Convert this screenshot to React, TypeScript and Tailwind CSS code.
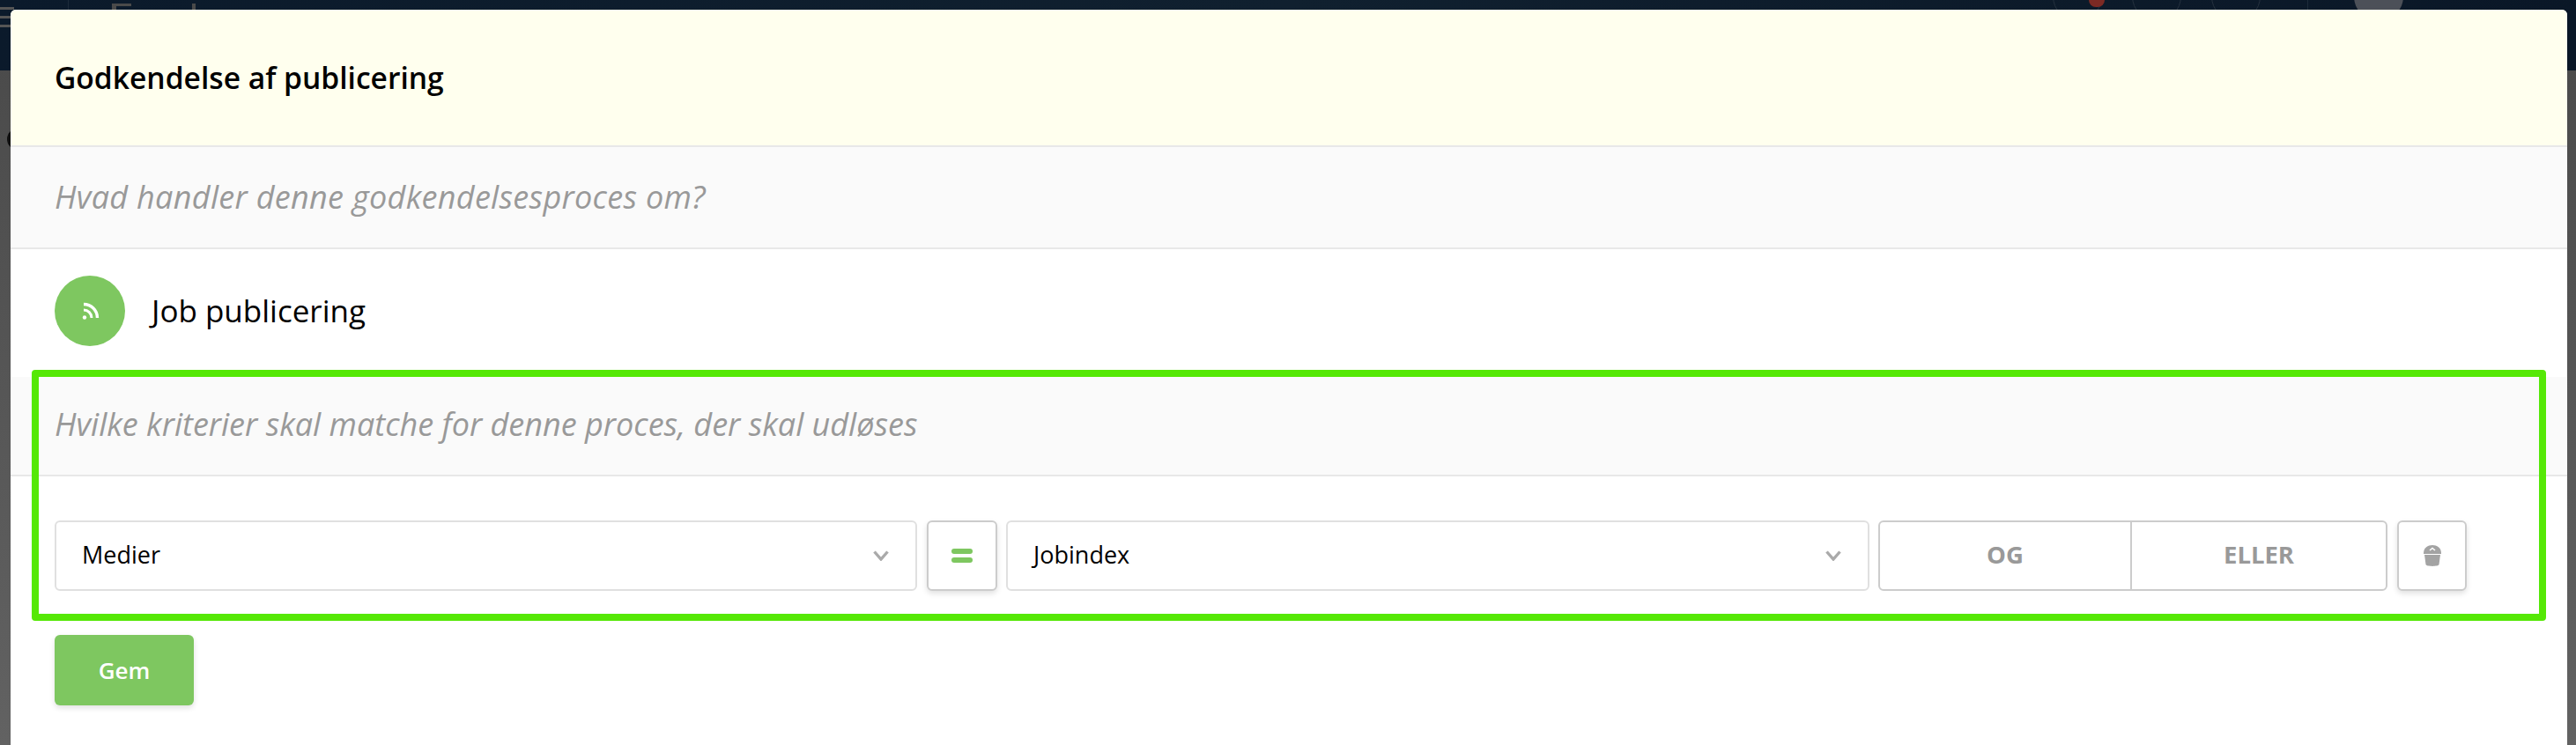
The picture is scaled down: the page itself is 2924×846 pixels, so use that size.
const font = { fontFamily: '"Open Sans", "Liberation Sans", sans-serif' };

function Chevron() {
  return (
    <svg width="20" height="12" viewBox="0 0 20 12" className="shrink-0">
      <path d="M2.5 1.5 L10 10 L17.5 1.5" fill="none" stroke="#aaaaaa" strokeWidth="3.4" />
    </svg>
  );
}

function Select({ label, width }: { label: string; width: string }) {
  return (
    <div className={`${width} h-20 shrink-0 border-2 border-[#e0e0e0] rounded-md bg-white flex items-center justify-between pl-[29px] pr-[29px]`}>
      <span className="text-[27px] text-black -mt-[2px]">{label}</span>
      <Chevron />
    </div>
  );
}

export default function App() {
  return (
    <div style={font} className="w-[2924px] h-[846px] overflow-hidden bg-gradient-to-b from-[#494949] to-[#626262] flex flex-col relative">
      <div className="absolute left-0 right-0 top-0 h-20 bg-gradient-to-r from-[#0b1a2b] via-[#10202f] to-[#0a1727]" />
      <div className="absolute left-0 top-[8px] w-4 h-[3px] bg-[#555555]" />
      <div className="absolute left-0 top-[18px] w-4 h-[3px] bg-[#555555]" />
      <div className="absolute left-0 top-[28px] w-4 h-[3px] bg-[#555555]" />
      <div className="absolute left-[77px] top-0 h-20 w-px bg-[#1d2b3a]" />
      <div className="absolute left-[127px] top-[4px] w-[22px] h-[3px] bg-[#4a4a4a]" />
      <div className="absolute left-[127px] top-[4px] w-[5px] h-10 bg-[#4a4a4a]" />
      <div className="absolute left-[218px] top-[4px] w-[4px] h-10 bg-[#4a4a4a]" />
      <div className="absolute left-[2330px] -top-8 w-14 h-14 rounded-full border border-[#26323f]" />
      <div className="absolute left-[2420px] -top-8 w-14 h-14 rounded-full border border-[#26323f]" />
      <div className="absolute left-[2510px] -top-8 w-14 h-14 rounded-full border border-[#26323f]" />
      <div className="absolute left-[2371px] -top-2 w-[18px] h-4 rounded-full bg-[#7c2a24]" />
      <div className="absolute left-[2619px] top-0 h-20 w-px bg-[#1d2b3a]" />
      <div className="absolute left-[2672px] -top-8 w-14 h-14 rounded-full bg-[#4c5058]" />
      <div className="absolute left-[8px] top-[146px] w-6 h-6 rounded-full bg-[#111111]" />
      <div className="relative mt-[11px] ml-3 w-[2902px] flex-1 bg-white rounded-t-md overflow-hidden flex flex-col">
        <div className="h-[154px] shrink-0 bg-[#ffffee] flex items-center px-[50px]">
          <h1 className="text-[33.6px] font-semibold text-black">Godkendelse af publicering</h1>
        </div>
        <div className="h-[118px] shrink-0 bg-[#fafafa] border-y-2 border-[#e8e8e8] flex items-center px-[50px]">
          <p className="text-[36px] italic text-[#999999] tracking-[0.3px]">Hvad handler denne godkendelsesproces om?</p>
        </div>
        <div className="h-[138px] shrink-0 flex items-center px-[50px] pt-[2px] gap-[30px]">
          <div className="w-20 h-20 rounded-full bg-[#7ec760] flex items-center justify-center">
            <svg width="20" height="20" viewBox="0 0 20 20" fill="none" className="ml-[2px]">
              <circle cx="3" cy="17.5" r="2.2" fill="#fff" />
              <path d="M2 9 A9 9 0 0 1 11 18" stroke="#fff" strokeWidth="3" />
              <path d="M2 2.5 A15.5 15.5 0 0 1 17.5 18" stroke="#fff" strokeWidth="3.4" />
            </svg>
          </div>
          <span className="text-[35px] text-black">Job publicering</span>
        </div>
        <div className="relative mx-6 h-[285px] border-8 border-[#55e806] rounded-[4px] -mt-[1px] z-10" />
        <div className="absolute left-0 right-0 top-[417px] h-[113px] bg-[#fafafa] border-b-2 border-[#e8e8e8] flex items-center px-[50px] pb-[3px]">
          <p className="text-[36px] italic text-[#999999]">Hvilke kriterier skal matche for denne proces, der skal udløses</p>
        </div>
        <div className="absolute left-[50px] top-[580px] flex">
          <Select label="Medier" width="w-[979px]" />
          <div className="ml-[11px] w-20 h-20 shrink-0 border-2 border-[#cccccc] rounded-md bg-white shadow-[0_3px_6px_rgba(0,0,0,0.12)] flex flex-col items-center justify-center gap-[4px]">
            <div className="w-6 h-[6px] rounded-sm bg-[#7ec760]" />
            <div className="w-6 h-[6px] rounded-sm bg-[#7ec760]" />
          </div>
          <div className="ml-[10px]"><Select label="Jobindex" width="w-[980px]" /></div>
          <div className="ml-[10px] w-[578px] h-20 shrink-0 border-2 border-[#cccccc] rounded-md flex text-[27.5px] font-bold text-[#999999]">
            <div className="w-[286px] border-r-2 border-[#cccccc] flex items-center justify-center pb-[3px]">OG</div>
            <div className="flex-1 flex items-center justify-center pb-[3px]">ELLER</div>
          </div>
          <div className="ml-[11px] w-[79px] h-20 shrink-0 border-2 border-[#cccccc] rounded-md bg-white shadow-[0_3px_6px_rgba(0,0,0,0.12)] flex items-center justify-center">
            <svg width="20" height="24" viewBox="0 0 20 24">
              <path d="M0 9 C0 3 5 0 10 0 C15 0 20 3 20 9 L20 10 L0 10 Z" fill="#a3a3a3" />
              <path d="M7 6 L10 3.5 L13 6" fill="none" stroke="#fff" strokeWidth="1.6" />
              <path d="M1 11 L19 11 L17.5 22 C17 24.5 3 24.5 2.5 22 Z" fill="#a3a3a3" />
            </svg>
          </div>
        </div>
        <div className="absolute left-[50px] top-[710px] w-[158px] h-20 bg-[#7ec760] rounded-md shadow-[0_3px_6px_rgba(0,0,0,0.12)] flex items-center justify-center text-white text-[26px] font-semibold">
          Gem
        </div>
      </div>
    </div>
  );
}
